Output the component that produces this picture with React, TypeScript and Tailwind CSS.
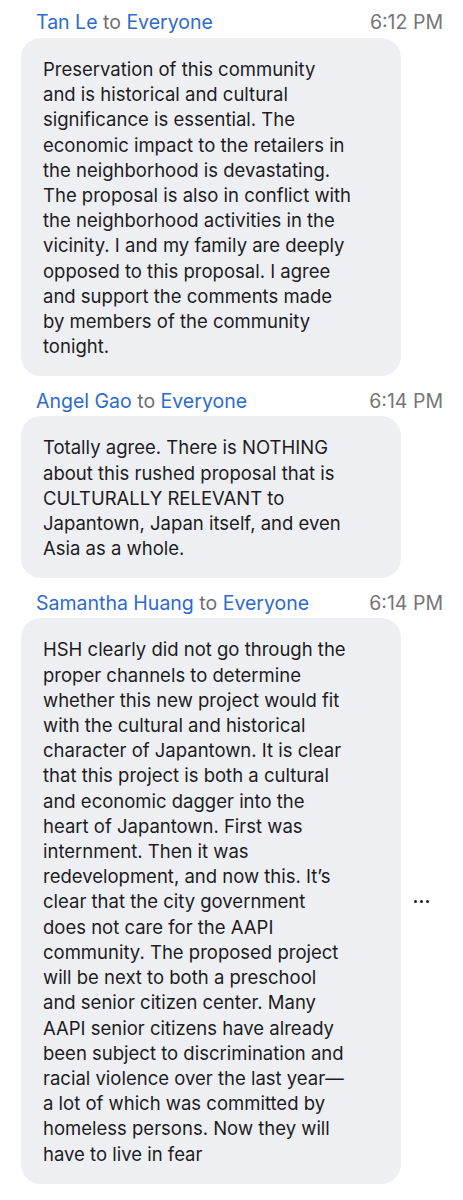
const messages = [
  {
    name: "Tan Le",
    time: "6:12 PM",
    lines: [
      "Preservation of this community",
      "and is historical and cultural",
      "significance is essential. The",
      "economic impact to the retailers in",
      "the neighborhood is devastating.",
      "The proposal is also in conflict with",
      "the neighborhood activities in the",
      "vicinity. I and my family are deeply",
      "opposed to this proposal. I agree",
      "and support the comments made",
      "by members of the community",
      "tonight.",
    ],
  },
  {
    name: "Angel Gao",
    time: "6:14 PM",
    lines: [
      "Totally agree. There is NOTHING",
      "about this rushed proposal that is",
      "CULTURALLY RELEVANT to",
      "Japantown, Japan itself, and even",
      "Asia as a whole.",
    ],
  },
  {
    name: "Samantha Huang",
    time: "6:14 PM",
    more: true,
    lines: [
      "HSH clearly did not go through the",
      "proper channels to determine",
      "whether this new project would fit",
      "with the cultural and historical",
      "character of Japantown. It is clear",
      "that this project is both a cultural",
      "and economic dagger into the",
      "heart of Japantown. First was",
      "internment. Then it was",
      "redevelopment, and now this. It\u2019s",
      "clear that the city government",
      "does not care for the AAPI",
      "community. The proposed project",
      "will be next to both a preschool",
      "and senior citizen center. Many",
      "AAPI senior citizens have already",
      "been subject to discrimination and",
      "racial violence over the last year\u2014",
      "a lot of which was committed by",
      "homeless persons. Now they will",
      "have to live in fear",
    ],
  },
];

export default function App() {
  return (
    <main
      className="bg-white min-h-[1200px] pt-[8px] pl-[21px] pr-[20px]"
      style={{ fontFamily: 'Inter, "Noto Sans", sans-serif' }}
    >
      {messages.map((m, i) => (
        <div key={i} className={i > 0 ? "mt-[10px]" : ""}>
          {/* header */}
          <div className="flex justify-between items-center h-[30px] pl-[15px] text-[19.5px]">
            <span>
              <span className="text-[#2e6bcb]">{m.name}</span>
              <span className="text-[#6e6e73]"> to </span>
              <span className="text-[#2e6bcb]">Everyone</span>
            </span>
            <span className="text-[#767678]">{m.time}</span>
          </div>

          {/* bubble */}
          <div className="flex items-center">
            <div className="w-[380px] shrink-0 bg-[#eeeff3] rounded-[20px] pl-[22px] pr-[10px] pt-[19px] pb-[17px] text-[18.5px] leading-[25.2px] text-[#1c1c1e]">
              {m.lines.map((l, j) => (
                <div key={j} className="whitespace-nowrap">
                  {l}
                </div>
              ))}
            </div>
            {m.more && (
              <div className="ml-[13px] flex gap-[3px]">
                <span className="w-[3px] h-[3px] rounded-full bg-[#222]" />
                <span className="w-[3px] h-[3px] rounded-full bg-[#222]" />
                <span className="w-[3px] h-[3px] rounded-full bg-[#222]" />
              </div>
            )}
          </div>
        </div>
      ))}
    </main>
  );
}
